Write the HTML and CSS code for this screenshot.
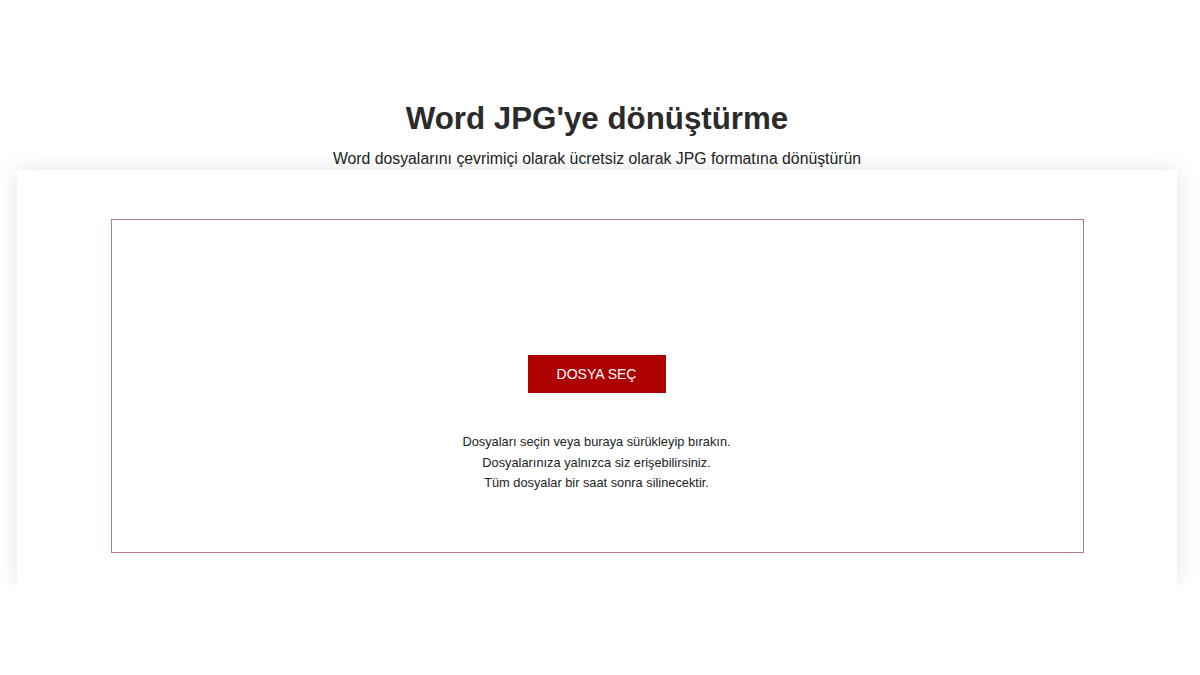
FILE: index.html
```html
<!DOCTYPE html>
<html lang="tr">
<head>
<meta charset="utf-8">
<title>Word JPG'ye dönüştürme</title>
<link rel="stylesheet" href="styles.css">
</head>
<body>
<header class="hero">
  <h1 class="title">Word JPG'ye dönüştürme</h1>
  <p class="subtitle">Word dosyalarını çevrimiçi olarak ücretsiz olarak JPG formatına dönüştürün</p>
</header>
<div class="card-clip">
  <section class="card">
    <div class="dropzone">
      <button class="pick">DOSYA SEÇ</button>
      <p class="hint">Dosyaları seçin veya buraya sürükleyip bırakın.<br>Dosyalarınıza yalnızca siz erişebilirsiniz.<br>Tüm dosyalar bir saat sonra silinecektir.</p>
    </div>
  </section>
</div>
</body>
</html>
```
FILE: styles.css
```css
html, body {
  margin: 0;
  padding: 0;
  background: #fff;
  font-family: "Liberation Sans", Arial, sans-serif;
  color: #222;
}
.hero {
  text-align: center;
  padding: 99px 6px 0 0;
}
.title {
  margin: 0;
  font-size: 31.3px;
  line-height: 40px;
  font-weight: bold;
  color: #2b2b2b;
}
.subtitle {
  margin: 10px 0 0;
  font-size: 15.8px;
  line-height: 20px;
  color: #222;
}
.card-clip {
  overflow: hidden;
  padding: 20px 0 0;
  margin-top: -19px;
  height: 415px;
}
.card {
  margin: 0 23px 0 17px;
  height: 415px;
  box-sizing: border-box;
  background: #fff;
  box-shadow: 0 0 22px rgba(0, 0, 0, 0.11);
  padding: 49px 93px 32px 94px;
}
.dropzone {
  height: 334px;
  box-sizing: border-box;
  border: 1px solid #b87a7c;
  display: flex;
  flex-direction: column;
  align-items: center;
  padding: 135px 2px 0 0;
}
.pick {
  width: 138px;
  height: 38px;
  border: none;
  background: #ad0000;
  color: #fff;
  font-family: "Liberation Sans", Arial, sans-serif;
  font-size: 14px;
  cursor: pointer;
}
.hint {
  margin: 39px 0 0;
  text-align: center;
  font-size: 12.8px;
  line-height: 20.5px;
  color: #222;
}
```
